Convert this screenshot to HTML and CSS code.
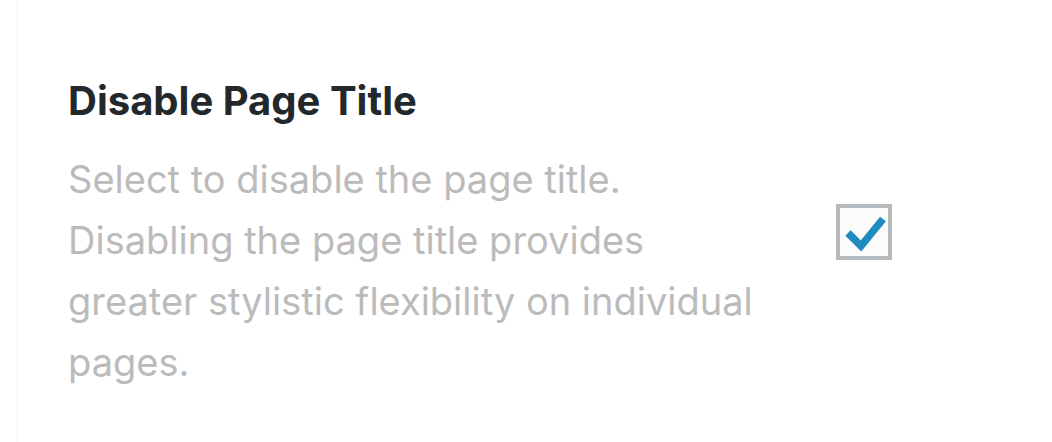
FILE: index.html
```html
<!DOCTYPE html>
<html lang="en">
<head>
    <meta charset="UTF-8">
    <meta name="viewport" content="width=device-width, initial-scale=1.0">
    <title>Disable Page Title</title>
    <link rel="stylesheet" href="styles.css">
</head>
<body>
    <div class="panel">
        <div class="option-row">
            <div class="option-text">
                <h3 class="option-title">Disable Page Title</h3>
                <p class="option-desc">Select to disable the page title. Disabling the page title provides greater stylistic flexibility on individual pages.</p>
            </div>
            <label class="check">
                <input type="checkbox" checked>
                <span class="check-box">
                    <svg viewBox="0 0 48 48" width="48" height="48">
                        <path d="M8 25 L21 38 L43 11" fill="none" stroke="#1e8cbe" stroke-width="7.5" stroke-linejoin="miter" stroke-linecap="butt"/>
                    </svg>
                </span>
            </label>
        </div>
    </div>
</body>
</html>
```

FILE: styles.css
```css
body {
    margin: 0;
    background-color: #fff;
    font-family: Inter, "Noto Sans", sans-serif;
}
.panel {
    margin-left: 17px;
    height: 442px;
    border-left: 1px solid #f3f3f3;
    padding: 77px 0 0 50px;
    box-sizing: border-box;
}
.option-row {
    display: flex;
    align-items: center;
}
.option-text {
    width: 700px;
}
.option-title {
    margin: 0 0 24px;
    font-size: 40px;
    font-weight: 700;
    line-height: 48px;
    color: #23282d;
}
.option-desc {
    margin: 0;
    font-size: 38px;
    line-height: 61px;
    color: #bbbbbb;
}
.check {
    margin-left: 68px;
    margin-bottom: 6px;
}
.check input {
    display: none;
}
.check-box {
    display: block;
    width: 48px;
    height: 48px;
    border: 4px solid #b4b9be;
    background-color: #fbfbfb;
}
.check-box svg {
    display: block;
}
```
